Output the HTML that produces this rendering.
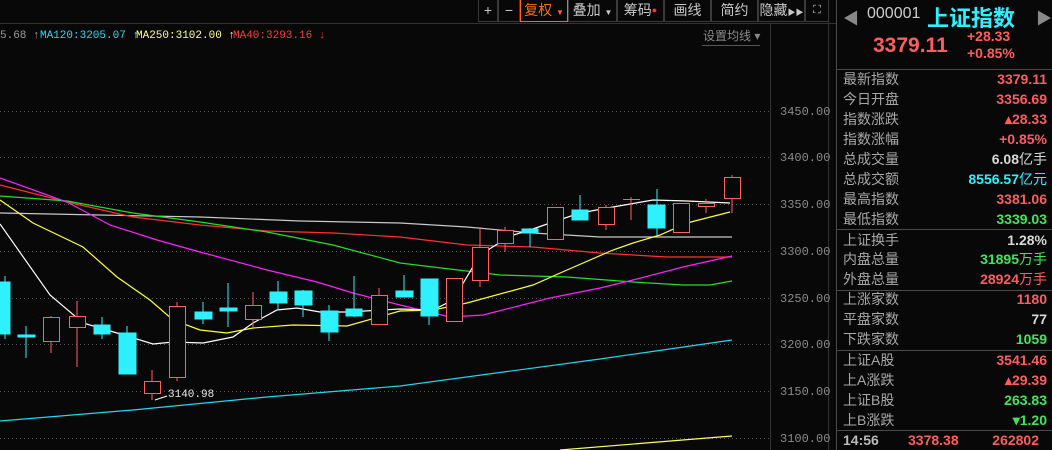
<!DOCTYPE html>
<html><head><meta charset="utf-8"><style>
*{margin:0;padding:0;box-sizing:border-box}
body{width:1052px;height:450px;background:#080808;overflow:hidden;position:relative;font-family:"Liberation Sans","Noto Sans CJK SC",sans-serif}
.a{position:absolute;white-space:nowrap}
.tb{position:absolute;top:0;height:22px;border:1px solid #3a3a3a;border-top:none;color:#c8c8c8;font-size:14px;line-height:21px;text-align:center;white-space:nowrap;overflow:hidden}
.row{position:absolute;left:843px;width:204px;height:20px;font-size:14px;line-height:20px;color:#a8a8a8}
.row b{position:absolute;right:0;top:0;font-weight:bold;font-family:"Liberation Sans","Noto Sans CJK SC",sans-serif}
.r{color:#ff5c5c}.g{color:#3ee65a}.w{color:#d8d8d8}.c{color:#2ff0ff}
.sep{position:absolute;left:836px;width:216px;height:1px;background:#4a4a4a}
</style></head><body>
<svg class="a" style="left:0;top:0" width="836" height="450">
<line x1="0" y1="23.5" x2="836" y2="23.5" stroke="#333"/>
<line x1="770.5" y1="24" x2="770.5" y2="450" stroke="#333"/>
<line x1="828.5" y1="0" x2="828.5" y2="450" stroke="#333"/>
<line x1="702" y1="45.5" x2="760" y2="45.5" stroke="#555"/>
<g stroke="#555" stroke-dasharray="1,3">
<line x1="0" y1="111.5" x2="770" y2="111.5"/><line x1="0" y1="157.5" x2="770" y2="157.5"/>
<line x1="0" y1="204.5" x2="770" y2="204.5"/><line x1="0" y1="251.5" x2="770" y2="251.5"/>
<line x1="0" y1="298.5" x2="770" y2="298.5"/><line x1="0" y1="344.5" x2="770" y2="344.5"/>
<line x1="0" y1="391.5" x2="770" y2="391.5"/><line x1="0" y1="438.5" x2="770" y2="438.5"/>
</g>
<g fill="#8a8a8a" font-family="Liberation Mono,monospace" font-size="12">
<text x="780" y="115">3450.00</text><text x="780" y="161">3400.00</text><text x="780" y="208">3350.00</text>
<text x="780" y="255">3300.00</text><text x="780" y="302">3250.00</text><text x="780" y="348">3200.00</text>
<text x="780" y="395">3150.00</text><text x="780" y="442">3100.00</text>
</g>
<g fill="none" stroke-width="1.2">
<polyline stroke="#c8c8c8" points="0,213 100,215 200,217 300,221 400,223 467,227 533,233 600,237 732,237"/>
<polyline stroke="#ff3030" points="0,185 67,202 133,217 200,225 267,231 333,233 400,237 467,245 533,247 600,253 667,257 732,257"/>
<polyline stroke="#22e022" points="0,196 67,201 133,213 200,222 267,232 333,245 400,263 433,267 500,275 567,277 633,282 683,285 710,285 732,281"/>
<polyline stroke="#ff20ff" points="0,178 67,202 110,225 157,240 200,252 267,270 317,282 353,293 400,305 450,317 483,315 550,298 600,288 633,280 683,267 732,256"/>
<polyline stroke="#ffff30" points="0,200 33,223 83,247 117,277 150,300 173,320 200,330 227,333 253,328 293,325 347,326 400,311 433,310 467,303 533,285 567,270 613,250 633,243 660,235 687,223 730,212"/>
<polyline stroke="#ffffff" points="0,224 50,295 83,323 117,333 153,344 173,342 203,343 233,337 253,323 277,310 297,308 320,312 347,312 400,309 433,310 453,300 480,255 510,236 530,230 553,222 580,213 613,207 653,200 687,201 730,203"/>
<polyline stroke="#20d8f0" points="0,421 133,410 267,397 400,386 600,359 732,340"/>
<polyline stroke="#ffff60" points="560,450 732,436"/>
</g>
<g stroke="#2ff0ff" fill="#2ff0ff">
<line x1="5" y1="276" x2="5" y2="339"/><rect x="0" y="282" width="10" height="52"/>
<line x1="26" y1="326" x2="26" y2="358"/><rect x="18" y="335" width="17" height="2"/>
<line x1="102" y1="317" x2="102" y2="339"/><rect x="94" y="325" width="16" height="9"/>
<line x1="127" y1="326" x2="127" y2="374"/><rect x="119" y="333" width="17" height="41"/>
<line x1="203" y1="302" x2="203" y2="324"/><rect x="195" y="312" width="17" height="7"/>
<line x1="228" y1="283" x2="228" y2="327"/><rect x="220" y="308" width="17" height="3"/>
<line x1="278" y1="281" x2="278" y2="310"/><rect x="270" y="292" width="17" height="11"/>
<line x1="303" y1="290" x2="303" y2="317"/><rect x="295" y="291" width="17" height="14"/>
<line x1="329" y1="305" x2="329" y2="341"/><rect x="321" y="311" width="17" height="21"/>
<line x1="354" y1="276" x2="354" y2="317"/><rect x="346" y="309" width="16" height="7"/>
<line x1="404" y1="275" x2="404" y2="297"/><rect x="396" y="291" width="17" height="6"/>
<line x1="429" y1="279" x2="429" y2="325"/><rect x="421" y="279" width="17" height="37"/>
<line x1="530" y1="228" x2="530" y2="247"/><rect x="522" y="229" width="16" height="4"/>
<line x1="580" y1="195" x2="580" y2="220"/><rect x="572" y="210" width="16" height="10"/>
<line x1="657" y1="189" x2="657" y2="236"/><rect x="648" y="205" width="17" height="23"/>
</g>
<g stroke="#ff6060" fill="#080808">
<line x1="51" y1="316" x2="51" y2="353"/><rect x="43.5" y="317.5" width="16" height="24"/>
<line x1="77" y1="301" x2="77" y2="367"/><rect x="69.5" y="316.5" width="16" height="11"/>
<line x1="152" y1="370" x2="152" y2="400"/><rect x="144.5" y="381.5" width="16" height="12"/>
<line x1="177" y1="302" x2="177" y2="381"/><rect x="169.5" y="306.5" width="16" height="71"/>
<line x1="253" y1="292" x2="253" y2="327"/><rect x="245.5" y="305.5" width="16" height="14"/>
<line x1="379" y1="288" x2="379" y2="324"/><rect x="371.5" y="295.5" width="16" height="29"/>
<line x1="454" y1="278" x2="454" y2="321"/><rect x="446.5" y="278.5" width="16" height="43"/>
<line x1="480" y1="227" x2="480" y2="287"/><rect x="472.5" y="247.5" width="16" height="33"/>
<line x1="505" y1="227" x2="505" y2="252"/><rect x="497.5" y="230.5" width="16" height="13"/>
<line x1="555" y1="207" x2="555" y2="240"/><rect x="547.5" y="207.5" width="16" height="32"/>
<line x1="606" y1="205" x2="606" y2="230"/><rect x="598.5" y="207.5" width="16" height="17"/>
<line x1="631" y1="197" x2="631" y2="220"/><line x1="623" y1="199.5" x2="640" y2="199.5"/>
<line x1="681" y1="203" x2="681" y2="232"/><rect x="673.5" y="203.5" width="16" height="29"/>
<line x1="706" y1="199" x2="706" y2="213"/><rect x="698.5" y="203.5" width="16" height="3"/>
<line x1="732" y1="175" x2="732" y2="213"/><rect x="724.5" y="177.5" width="16" height="21"/>
</g>
<line x1="155" y1="400" x2="167" y2="396" stroke="#fff"/>
<text x="168" y="397" fill="#e8e8e8" font-family="Liberation Mono,monospace" font-size="11">3140.98</text>
<g font-family="Liberation Mono,monospace" font-size="11">
<text x="0" y="38" fill="#9a9a9a">5.68 ↑</text>
<text x="40" y="38" fill="#2fd8f0">MA120:3205.07 ↑</text>
<text x="136" y="38" fill="#ffff90">MA250:3102.00 ↑</text>
<text x="233" y="38" fill="#ff3838">MA40:3293.16 ↓</text>
</g>
<text x="703" y="40" fill="#8a8a8a" font-size="12">设置均线 ▾</text>
</svg>
<div class="tb" style="left:478px;width:20px">+</div>
<div class="tb" style="left:498px;width:22px">−</div>
<div class="tb" style="left:520px;width:48px;color:#ff6a1a;border:1px solid #ff6a1a;border-top:none">复权 <span style="font-size:8px">▼</span></div>
<div class="tb" style="left:568px;width:49px">叠加 <span style="font-size:8px">▼</span></div>
<div class="tb" style="left:617px;width:47px">筹码<span style="color:#f33;font-size:9px;vertical-align:top">●</span></div>
<div class="tb" style="left:664px;width:47px">画线</div>
<div class="tb" style="left:711px;width:47px">简约</div>
<div class="tb" style="left:758px;width:47px">隐藏<span style="font-size:8px">▶▶</span></div>
<div class="tb" style="left:805px;width:24px;font-size:11px">⛶</div>
<div class="a" style="left:836px;top:0;width:1px;height:450px;background:#4a4a4a"></div>
<div class="a" style="left:843px;top:5px;color:#888;font-size:16px">◀</div>
<div class="a" style="left:1036px;top:5px;color:#888;font-size:16px">▶</div>
<div class="a" style="left:867px;top:5px;color:#ccc;font-size:16px">000001</div>
<div class="a" style="left:927px;top:1px;color:#2ff0ff;font-size:22px;font-weight:bold">上证指数</div>
<div class="a r" style="left:873px;top:34px;font-size:21px;font-weight:bold">3379.11</div>
<div class="a r" style="left:967px;top:28px;font-size:14px;font-weight:bold">+28.33</div>
<div class="a r" style="left:967px;top:45px;font-size:14px;font-weight:bold">+0.85%</div>
<div class="sep" style="top:69px"></div>
<div class="row" style="top:69px">最新指数<b class="r">3379.11</b></div>
<div class="row" style="top:89px">今日开盘<b class="r">3356.69</b></div>
<div class="row" style="top:109px">指数涨跌<b class="r">▴28.33</b></div>
<div class="row" style="top:129px">指数涨幅<b class="r">+0.85%</b></div>
<div class="row" style="top:149px">总成交量<b class="w">6.08<span style="font-weight:normal">亿手</span></b></div>
<div class="row" style="top:169px">总成交额<b class="c">8556.57<span style="font-weight:normal">亿元</span></b></div>
<div class="row" style="top:189px">最高指数<b class="r">3381.06</b></div>
<div class="row" style="top:209px">最低指数<b class="g">3339.03</b></div>
<div class="sep" style="top:229px"></div>
<div class="row" style="top:230px">上证换手<b class="w">1.28%</b></div>
<div class="row" style="top:249px">内盘总量<b class="g">31895<span style="font-weight:normal">万手</span></b></div>
<div class="row" style="top:269px">外盘总量<b class="r">28924<span style="font-weight:normal">万手</span></b></div>
<div class="sep" style="top:290px"></div>
<div class="row" style="top:289px">上涨家数<b class="r">1180</b></div>
<div class="row" style="top:309px">平盘家数<b class="w">77</b></div>
<div class="row" style="top:329px">下跌家数<b class="g">1059</b></div>
<div class="sep" style="top:350px"></div>
<div class="row" style="top:350px">上证A股<b class="r">3541.46</b></div>
<div class="row" style="top:370px">上A涨跌<b class="r">▴29.39</b></div>
<div class="row" style="top:390px">上证B股<b class="g">263.83</b></div>
<div class="row" style="top:410px">上B涨跌<b class="g">▾1.20</b></div>
<div class="sep" style="top:430px"></div>
<div class="row" style="top:430px;color:#bbb;font-weight:bold">14:56<span class="r" style="position:absolute;left:65px">3378.38</span><b class="r" style="right:8px">262802</b></div>
</body></html>
